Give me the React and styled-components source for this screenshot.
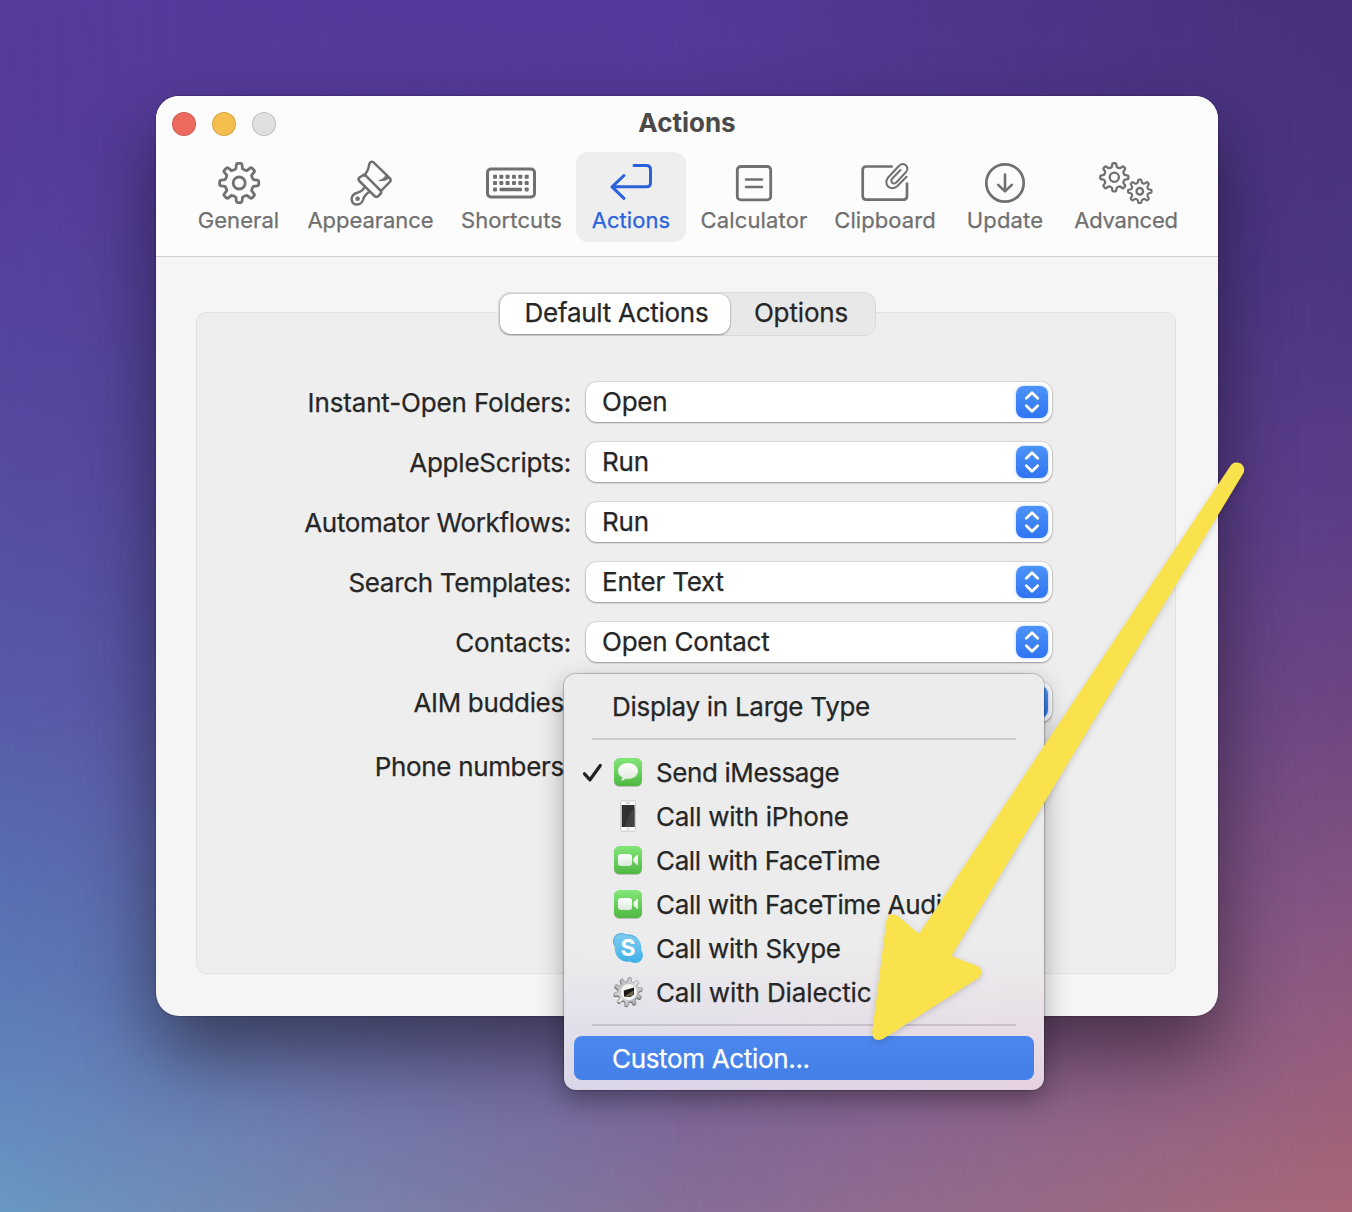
import React from "react";
import styled, { createGlobalStyle, css } from "styled-components";

const GlobalStyle = createGlobalStyle`
  * { box-sizing: border-box; }
  html, body { margin: 0; padding: 0; }
  body {
    width: 1352px;
    height: 1212px;
    overflow: hidden;
    font-family: Inter, "Liberation Sans", sans-serif;
    color: #262626;
    -webkit-text-stroke: 0.25px currentColor;
  }
`;

const Desktop = styled.main`
  position: relative;
  isolation: isolate;
  width: 1352px;
  height: 1212px;
  padding: 96px 134px 196px 156px;
  overflow: hidden;
  background: linear-gradient(#573b9b 0%, #563c9a 12%, #5549a0 36%, #575aaa 58%, #5b78b7 80%, #6898c2 100%);

  &::before,
  &::after {
    content: "";
    position: absolute;
    inset: 0;
    z-index: -1;
  }
  &::before {
    background: linear-gradient(#55399a 0%, #563c98 20%, #5b4796 50%, #6f5c9c 80%, #866e98 100%);
    mask-image: linear-gradient(90deg, transparent, #000 50%);
  }
  &::after {
    background: linear-gradient(#48307a 0%, #4c3581 22%, #5b3d86 42%, #6f4782 60%, #8d587f 80%, #a86778 100%);
    mask-image: linear-gradient(90deg, transparent 50%, #000);
  }
`;

const Window = styled.section`
  display: flex;
  flex-direction: column;
  height: 920px;
  border-radius: 23px;
  background: #f5f5f5;
  box-shadow: 0 0 2px rgba(0, 0, 0, 0.5), 0 36px 76px rgba(0, 0, 0, 0.48);
`;

const Header = styled.header`
  height: 161px;
  border-bottom: 1.5px solid #cfcfcf;
  border-radius: 23px 23px 0 0;
  background: #fcfcfc;
`;

const TitleBar = styled.div`
  display: grid;
  grid-template-columns: 1fr auto 1fr;
  align-items: center;
  height: 56px;
  padding: 0 16px;
`;

const Lights = styled.div`
  display: flex;
  gap: 16px;
`;

const Light = styled.span`
  width: 24px;
  height: 24px;
  border: 1px solid rgba(0, 0, 0, 0.14);
  border-radius: 50%;
  background: ${(p) => p.$color};
`;

const Title = styled.h1`
  margin: 0;
  padding-bottom: 2px;
  font-size: 26px;
  line-height: 32px;
  font-weight: 700;
  color: #4a4a4a;
  -webkit-text-stroke: 0;
`;

const Toolbar = styled.nav`
  display: flex;
  padding-left: 27px;
`;

const Tool = styled.div`
  display: flex;
  flex-direction: column;
  align-items: center;
  width: ${(p) => p.$w}px;
  height: 90px;
  padding-top: 7px;
  border-radius: 12px;
  color: #707070;
  ${(p) => p.$active && css`
    color: #2b62dc;
    background: #eeeeee;
  `}
  svg { display: block; }
`;

const ToolLabel = styled.span`
  font-size: 22px;
  line-height: 26px;
  white-space: nowrap;
  letter-spacing: ${(p) => p.$track}px;
`;

const Content = styled.div`
  flex: 1;
  padding: 55px 42px 42px 40px;
`;

const GroupBox = styled.div`
  display: flex;
  flex-direction: column;
  align-items: center;
  height: 662px;
  border: 1px solid #e2e2e2;
  border-radius: 10px;
  background: #eeeeee;
`;

const Segmented = styled.div`
  display: flex;
  width: 378px;
  height: 44px;
  margin-top: -21px;
  margin-left: 2px;
  padding: 1px;
  border: 1px solid #dadada;
  border-radius: 12px;
  background: #e8e8e8;
`;

const Segment = styled.div`
  width: ${(p) => p.$w}px;
  height: 40px;
  border-radius: 11px;
  text-align: center;
  font-size: 26px;
  line-height: 37px;
  letter-spacing: ${(p) => p.$track}px;
  ${(p) => p.$active && css`
    padding-left: 3px;
    background: #fff;
    box-shadow: 0 0 1px 1px rgba(0, 0, 0, 0.1), 0 1px 2px rgba(0, 0, 0, 0.3);
  `}
`;

const Form = styled.div`
  align-self: stretch;
  display: flex;
  flex-direction: column;
  gap: 20px;
  margin-top: 46px;
`;

const Row = styled.div`
  display: grid;
  grid-template-columns: 374px 466px;
  column-gap: 15px;
  height: 40px;
  margin-top: ${(p) => p.$shift || 0}px;
`;

const Label = styled.label`
  text-align: right;
  white-space: nowrap;
  font-size: 26px;
  line-height: 41px;
  letter-spacing: ${(p) => p.$track}px;
`;

const Select = styled.div`
  display: flex;
  align-items: center;
  justify-content: space-between;
  height: 40px;
  padding: 0 4px 0 16px;
  border-radius: 11px;
  background: #fff;
  box-shadow: 0 0 1px 1px rgba(0, 0, 0, 0.09), 0 1px 2px rgba(0, 0, 0, 0.3);
  font-size: 26px;
  line-height: 40px;
  letter-spacing: -0.22px;
`;

const Stepper = styled.span`
  display: flex;
  width: 32px;
  height: 32px;
  border-radius: 8px;
  background: linear-gradient(#4c93f8, #2f74f1);
  box-shadow: 0 0 3px rgba(60, 130, 245, 0.45);
`;

const Menu = styled.div`
  position: absolute;
  left: 564px;
  top: 674px;
  width: 480px;
  height: 416px;
  padding: 10px;
  border-radius: 12px;
  background: linear-gradient(#ececec 66%, rgba(236, 236, 236, 0)),
    linear-gradient(90deg, #d9d5e8, #e5d2e2);
  box-shadow: 0 0 1px 1px rgba(0, 0, 0, 0.22), 0 10px 26px rgba(0, 0, 0, 0.32);
`;

const MenuItem = styled.div`
  display: flex;
  align-items: center;
  height: 44px;
  padding-left: 8px;
  border-radius: 8px;
  ${(p) => p.$active && css`
    color: #fff;
    background: linear-gradient(#4b87ee, #427fe7);
  `}
`;

const MenuText = styled.span`
  padding-top: 2px;
  white-space: nowrap;
  font-size: 26px;
  line-height: 42px;
  letter-spacing: ${(p) => p.$track}px;
`;

const Slot = styled.span`
  flex: none;
  display: flex;
  align-items: center;
  width: ${(p) => p.$w}px;
`;

const Separator = styled.div`
  height: 2px;
  margin: 10px 18px;
  background: rgba(60, 50, 70, 0.17);
`;

const Pointer = styled.svg`
  position: absolute;
  left: 0;
  top: 0;
  filter: drop-shadow(0 2px 3px rgba(0, 0, 0, 0.16));
  pointer-events: none;
`;

function gearPath(cx, cy, outer, inner, teeth = 8, turn = 0) {
  const step = (Math.PI * 2) / teeth;
  const at = (r, a) => `${(cx + r * Math.cos(a)).toFixed(2)} ${(cy + r * Math.sin(a)).toFixed(2)}`;
  let d = "";
  for (let i = 0; i < teeth; i++) {
    const a = i * step - Math.PI / 2 + turn;
    d += `${i ? "L" : "M"}${at(inner, a - step * 0.29)}`;
    d += `L${at(outer - 1.2, a - step * 0.2)}Q${at(outer, a - step * 0.18)} ${at(outer, a - step * 0.1)}`;
    d += `L${at(outer, a + step * 0.1)}Q${at(outer, a + step * 0.18)} ${at(outer - 1.2, a + step * 0.2)}`;
    d += `L${at(inner, a + step * 0.29)}Q${at(inner - 0.9, a + step * 0.5)} ${at(inner, a + step * 0.71)}`;
  }
  return `${d}Z`;
}

/* Toolbar drawings share a 60 x 48 canvas; `x` is its left edge in window space. */
const ToolIcon = ({ x, stroke = 2.8, children }) => (
  <svg width="60" height="48" viewBox={`${x} 159 60 48`} fill="none" stroke="currentColor"
    strokeWidth={stroke} strokeLinecap="round" strokeLinejoin="round">
    {children}
  </svg>
);

const keyXs = [495, 501.3, 507.6, 514, 520.3, 526.7];

const icons = {
  general: (
    <ToolIcon x={208.8}>
      <path d={gearPath(239, 183, 19.6, 14.6)} />
      <circle cx="239" cy="183" r="6" />
    </ToolIcon>
  ),
  appearance: (
    <ToolIcon x={341} stroke={2.5}>
      <path d="M364.3 175.5Q368.5 170.5 369.3 164.2Q370.5 160.5 373.5 162.3L390 178.3Q391.3 180 390 181.7L381.5 190.5" />
      <path d="M362.2 175.8Q364.2 174 366 175.8L380.5 190.5Q382 192.3 380.3 194L378 196.3Q376.2 197.7 374.5 196L359.3 181Q357.8 179.2 359.3 177.6Z" />
      <path d="M364.5 186.5Q363.5 190.5 358.5 192.2Q351.7 193.8 351.6 199.3Q352.3 204.8 357.5 204.6Q361.8 204 363.2 199.5Q364.3 195 369.8 191.5" />
      <path d="M385.8 174.5Q385.5 178.5 378.8 180.6Q385 181.6 389.2 178.2Z" fill="currentColor" strokeWidth="0.8" />
      <circle cx="357.6" cy="198.8" r="2.3" fill="currentColor" stroke="none" />
    </ToolIcon>
  ),
  shortcuts: (
    <ToolIcon x={482} stroke={3}>
      <rect x="487.5" y="169" width="47" height="28" rx="3.5" />
      <g fill="currentColor" stroke="none">
        {keyXs.map((k) => <rect key={`a${k}`} x={k - 2} y="174.7" width="4" height="4" rx="0.8" />)}
        {keyXs.map((k) => <rect key={`b${k}`} x={k - 2} y="181" width="4" height="4" rx="0.8" />)}
        <rect x="493" y="187.4" width="4" height="4" rx="0.8" />
        <rect x="499.5" y="187.7" width="22.5" height="3.5" rx="1" />
        <rect x="524.7" y="187.4" width="4" height="4" rx="0.8" />
      </g>
    </ToolIcon>
  ),
  actions: (
    <ToolIcon x={601} stroke={3}>
      <path d="M634 165.5H646.5Q650.5 165.5 650.5 169.5V182.8Q650.5 186.8 646.5 186.8H612.5M624 175.5L612 186.8L624 198.3" />
    </ToolIcon>
  ),
  calculator: (
    <ToolIcon x={724}>
      <rect x="737.3" y="166.5" width="33.4" height="33.4" rx="3.5" />
      <path d="M746 179.6H762M746 187H762" strokeWidth="2.5" />
    </ToolIcon>
  ),
  clipboard: (
    <ToolIcon x={854.7} stroke={2.7}>
      <path strokeLinecap="butt" d="M892.5 166.5H866Q862.4 166.5 862.4 170V196Q862.4 199.6 866 199.6H903.3Q906.7 199.6 906.7 196V182.5" />
      <path strokeWidth="2" d="M906.3 176.8L896.8 186.2Q892 190 887.8 186.5Q884.3 182.2 887.6 177.8L898.3 166.2Q901.5 162.6 905.3 165Q908.7 168.2 905.8 172L896.2 182.2Q893.8 184.3 891.7 182.8Q890.2 180.6 892 178.5L900.2 170" />
    </ToolIcon>
  ),
  update: (
    <ToolIcon x={975} stroke={2.7}>
      <circle cx="1005" cy="183" r="18.7" />
      <path strokeWidth="2.6" d="M1005 174.5V191M998.2 184.9L1005 191.4L1011.8 184.9" />
    </ToolIcon>
  ),
  advanced: (
    <ToolIcon x={1096} stroke={2.3}>
      <path d={gearPath(1114.3, 177.3, 14.1, 10.7)} />
      <circle cx="1114.3" cy="177.3" r="4.6" />
      <path d={gearPath(1139.8, 191.3, 11.8, 9)} strokeWidth="2.1" />
      <circle cx="1139.8" cy="191.3" r="3.3" />
    </ToolIcon>
  ),
};

const Chevrons = () => (
  <svg width="32" height="32" viewBox="0 0 32 32" fill="none" stroke="#fff" strokeWidth="2.8" strokeLinecap="round" strokeLinejoin="round">
    <path d="M10.3 12.3L16 6.8L21.7 12.3M10.3 19.7L16 25.2L21.7 19.7" />
  </svg>
);

const Check = () => (
  <svg width="22" height="22" viewBox="0 0 22 22" fill="none" stroke="#222" strokeWidth="3.2" strokeLinecap="round" strokeLinejoin="round">
    <path d="M2.5 12.8L8 18.8L18.3 4.5" />
  </svg>
);

const GreenTile = ({ id, children }) => (
  <svg width="32" height="32" viewBox="0 0 32 32">
    <defs>
      <linearGradient id={`${id}g`} x1="0" y1="0" x2="0" y2="1">
        <stop offset="0" stopColor="#83e679" /><stop offset="1" stopColor="#4fb842" />
      </linearGradient>
      <linearGradient id={`${id}w`} x1="0" y1="0" x2="0" y2="1">
        <stop offset="0" stopColor="#fff" /><stop offset="1" stopColor="#dbe8da" />
      </linearGradient>
    </defs>
    <rect x="2" y="3" width="28" height="28" rx="5.5" fill="#000" opacity="0.18" />
    <rect x="2" y="2" width="28" height="28" rx="5.5" fill={`url(#${id}g)`} />
    <g fill={`url(#${id}w)`}>{children}</g>
  </svg>
);

const MessagesIcon = () => (
  <GreenTile id="msg">
    <path d="M16 7C10.3 7 6 10.6 6 15C6 17.8 7.7 20.2 10.3 21.6Q10.2 23.6 8.7 24.8Q11.8 24.7 13.6 22.8Q14.8 23 16 23C21.7 23 26 19.4 26 15S21.7 7 16 7Z" />
  </GreenTile>
);

const FaceTimeIcon = ({ id }) => (
  <GreenTile id={id}>
    <rect x="6" y="10" width="14" height="12" rx="3" />
    <path d="M21.3 14.5L25 11Q26 10.5 26 11.6V20.4Q26 21.5 25 21L21.3 17.5Z" />
  </GreenTile>
);

const PhoneIcon = () => (
  <svg width="32" height="32" viewBox="0 0 32 32">
    <rect x="8.5" y="0.8" width="15" height="30.4" rx="2" fill="#fbfbfb" stroke="#c6c6c6" strokeWidth="0.9" />
    <rect x="9.7" y="5" width="12.8" height="22" fill="#303030" />
    <path d="M22.5 5V8Q16 14 13 27H22.5Z" fill="#424242" />
    <path d="M14 3H18" stroke="#aaa" strokeWidth="1" />
    <circle cx="16" cy="29" r="1.2" fill="none" stroke="#cfcfcf" strokeWidth="0.7" />
  </svg>
);

const SkypeLetter = styled.text`
  font: 700 23px Inter, "Liberation Sans", sans-serif;
  fill: #fff;
`;

const SkypeIcon = () => (
  <svg width="32" height="32" viewBox="0 0 32 32">
    <defs>
      <linearGradient id="sky" x1="0" y1="0" x2="0" y2="1">
        <stop offset="0" stopColor="#84cdf2" /><stop offset="1" stopColor="#3fb0e8" />
      </linearGradient>
    </defs>
    <path fill="url(#sky)" d="M9 1Q12.5 1 14.5 2.5Q22 1.8 26.3 7Q30 11.8 29.2 18Q31.2 20.5 31 24Q29.8 30.8 23 31Q20 31 17.8 29.6Q10.5 30.3 6 25.5Q2 20.5 2.8 14.3Q1 12 1 9Q2 1.5 9 1Z" />
    <path d="M3.3 14Q1.3 12 1.5 8.5Q2.5 2.5 8.5 1.6Q11.8 1.5 14.3 3Q20 2.4 24 5.5" fill="none" stroke="#4aa5d8" strokeWidth="0.9" />
    <SkypeLetter x="16" y="24.2" textAnchor="middle">S</SkypeLetter>
  </svg>
);

const DialecticIcon = () => (
  <svg width="32" height="32" viewBox="0 0 32 32">
    <defs>
      <linearGradient id="metal" x1="0" y1="0" x2="1" y2="1">
        <stop offset="0" stopColor="#9a9a9a" /><stop offset="0.5" stopColor="#e6e6e6" /><stop offset="1" stopColor="#8a8a8a" />
      </linearGradient>
    </defs>
    <path d={gearPath(15.8, 16.8, 14.4, 10.6, 10, 0.12)} fill="#5e5e5e" />
    <path d={gearPath(16.2, 15.8, 14.4, 10.6, 10, 0.12)} fill="url(#metal)" stroke="#8f8f8f" strokeWidth="0.7" />
    <circle cx="16.8" cy="16" r="8.6" fill="#f4f4f4" stroke="#bdbdbd" strokeWidth="0.8" />
    <path d="M11.8 14.5L22 11.5V18.5L18.5 21L12 20.5Z" fill="#1a1815" />
    <path d="M13 20L17.5 17L21.5 14.5V18.5L18.3 20.5Z" fill="#71674f" />
  </svg>
);

const tools = [
  { id: "general", label: "General", w: 111, track: 0.07 },
  { id: "appearance", label: "Appearance", w: 153, track: -0.05 },
  { id: "shortcuts", label: "Shortcuts", w: 129, track: 0.12 },
  { id: "actions", label: "Actions", w: 110, track: 0.07 },
  { id: "calculator", label: "Calculator", w: 136, track: 0.15 },
  { id: "clipboard", label: "Clipboard", w: 126, track: 0.07 },
  { id: "update", label: "Update", w: 114, track: 0.18 },
  { id: "advanced", label: "Advanced", w: 128, track: -0.2 },
];

const rows = [
  { label: "Instant-Open Folders:", value: "Open", track: -0.15 },
  { label: "AppleScripts:", value: "Run", track: -0.22 },
  { label: "Automator Workflows:", value: "Run", track: -0.33 },
  { label: "Search Templates:", value: "Enter Text", track: -0.3 },
  { label: "Contacts:", value: "Open Contact", track: -0.2 },
  { label: "AIM buddies:", value: "", track: -0.33 },
];

const calls = [
  { label: "Send iMessage", icon: <MessagesIcon />, checked: true, track: -0.4 },
  { label: "Call with iPhone", icon: <PhoneIcon />, track: -0.25 },
  { label: "Call with FaceTime", icon: <FaceTimeIcon id="ft" />, track: -0.36 },
  { label: "Call with FaceTime Audio", icon: <FaceTimeIcon id="fta" />, track: -0.33 },
  { label: "Call with Skype", icon: <SkypeIcon />, track: -0.28 },
  { label: "Call with Dialectic", icon: <DialecticIcon />, track: -0.13 },
];

export default function App() {
  return (
    <>
      <GlobalStyle />
      <Desktop>
        <Window>
          <Header>
            <TitleBar>
              <Lights>
                <Light $color="#ed6a5f" />
                <Light $color="#f5bf4f" />
                <Light $color="#e0e0e0" />
              </Lights>
              <Title>Actions</Title>
            </TitleBar>
            <Toolbar>
              {tools.map((t) => (
                <Tool key={t.id} $w={t.w} $active={t.id === "actions"}>
                  {icons[t.id]}
                  <ToolLabel $track={t.track}>{t.label}</ToolLabel>
                </Tool>
              ))}
            </Toolbar>
          </Header>
          <Content>
            <GroupBox>
              <Segmented>
                <Segment $w={230} $active $track={-0.27}>Default Actions</Segment>
                <Segment $w={142} $track={-0.15}>Options</Segment>
              </Segmented>
              <Form>
                {rows.map((r) => (
                  <Row key={r.label}>
                    <Label $track={r.track}>{r.label}</Label>
                    <Select>
                      <span>{r.value}</span>
                      <Stepper><Chevrons /></Stepper>
                    </Select>
                  </Row>
                ))}
                <Row $shift={4}>
                  <Label $track={-0.34}>Phone numbers:</Label>
                </Row>
              </Form>
            </GroupBox>
          </Content>
        </Window>
        <Menu>
          <MenuItem>
            <Slot $w={30} />
            <MenuText $track={-0.29}>Display in Large Type</MenuText>
          </MenuItem>
          <Separator />
          {calls.map((c) => (
            <MenuItem key={c.label}>
              <Slot $w={30}>{c.checked && <Check />}</Slot>
              <Slot $w={44}>{c.icon}</Slot>
              <MenuText $track={c.track}>{c.label}</MenuText>
            </MenuItem>
          ))}
          <Separator />
          <MenuItem $active>
            <Slot $w={30} />
            <MenuText $track={-0.33}>Custom Action...</MenuText>
          </MenuItem>
        </Menu>
        <Pointer width="1352" height="1212" viewBox="0 0 1352 1212">
          <path fill="#fae24c" d="M919 934L898.5 916.5Q889 910.5 886.5 920L872.2 1032Q872.5 1043 883 1039L978.5 978Q985 971 977.5 966L951.5 956L1243.5 473A7.5 7.5 0 0 0 1231 465Z" />
        </Pointer>
      </Desktop>
    </>
  );
}
